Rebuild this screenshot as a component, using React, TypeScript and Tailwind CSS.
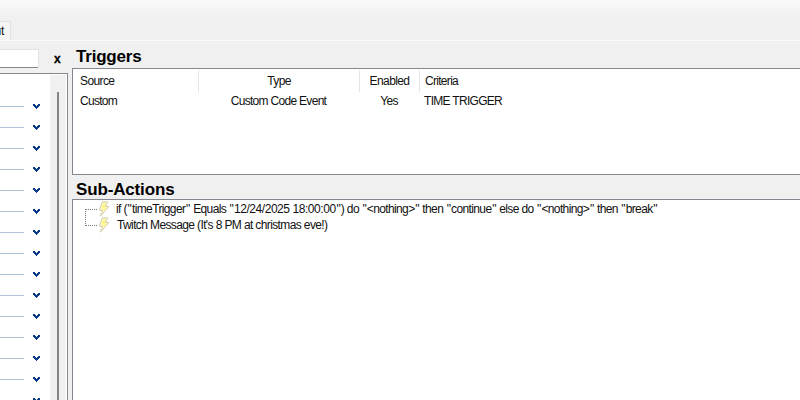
import React from "react";

const rows = Array.from({ length: 15 }, (_, i) => i);

const condition = `if ("timeTrigger" Equals "12/24/2025 18:00:00") do "<nothing>" then "continue" else do "<nothing>" then "break"`;

function Chevron() {
  return (
    <svg width="7" height="5" viewBox="0 0 7 5" shapeRendering="crispEdges" className="ml-[9px] block" fill="#063a86">
      <path d="M0 0h2v1h1v1h1v-1h1v-1h2v2h-1v1h-1v1h-1v1h-1v-1h-1v-1h-1v-1h-1z" />
    </svg>
  );
}

function Bolt() {
  return (
    <svg width="12" height="16" viewBox="0 0 12 16" className="block shrink-0">
      <path d="M4.3 .8H9.6L7.4 5.5H10.9L2.4 15.2 4.5 9.2H1.4Z" fill="#fffac4" stroke="#cfc6a8" strokeWidth=".9" strokeLinejoin="round" />
      <path d="M5.6 2.4L3.4 7.6H6.5L5.2 10.6 8.6 6.6H6L7.8 2.4Z" fill="#fff67e" />
    </svg>
  );
}

function Condition() {
  return (
    <>
      {condition.split(/("|12\/24\/2025 18:00:00)/).map((part, i) => {
        if (part === '"') return <span key={i} className="mx-[0.73px]">"</span>;
        if (part.startsWith("12/")) return <span key={i} className="tracking-[-0.44px]">{part}</span>;
        return part;
      })}
    </>
  );
}

function Sidebar() {
  return (
    <aside className="flex w-[72px] shrink-0 flex-col">
      <div className="flex h-[32px] shrink-0 pt-[8px]">
        <div className="h-[19px] w-[39px] shrink-0 rounded-br-[2px] border-t border-r border-b border-[#e3e3e3] border-b-[#868686] bg-white" />
        <span className="mt-[2px] ml-[15px] text-[12px] leading-[16px] font-bold text-black [-webkit-text-stroke:0.3px_black]">x</span>
      </div>
      <div className="flex min-h-0 w-[68px] flex-1 border-t border-r border-[#828790] bg-white">
        <div className="w-[50px] overflow-hidden pt-[22px]">
          {rows.map((r) => (
            <div key={r} className="flex h-[21px] items-center">
              <div className="h-px w-[24px] bg-[#adc1d9]" />
              <Chevron />
            </div>
          ))}
        </div>
        <div className="mt-px mr-px flex w-[16px] justify-center bg-[#f0f0f0]">
          <div className="mt-[17px] w-[2px] bg-[#858585]" />
        </div>
      </div>
    </aside>
  );
}

export default function App() {
  return (
    <div className="flex h-[400px] w-[800px] flex-col overflow-hidden bg-[#f0f0f0] font-['Liberation_Sans',Arial,sans-serif] text-[12px] leading-[14px] text-[#101010]">
      <header className="flex h-[41px] shrink-0 flex-col justify-end bg-linear-to-b from-[#f8f8f8] from-10% to-[#f0f0f0] to-40%">
        <div className="flex h-[19px] w-[11px] justify-end overflow-hidden border-t border-r border-[#e2e2e2] bg-[#f5f5f5] pt-[2px] pr-[6px] tracking-[-0.3px]">ut</div>
        <div className="h-px bg-[#fafafa]" />
      </header>
      <div className="flex min-h-0 flex-1">
        <Sidebar />
        <main className="flex min-w-0 flex-1 flex-col">
          <h2 className="h-[27px] shrink-0 pt-[6px] pl-[4px] text-[17px] leading-[20px] font-bold tracking-[-0.2px] text-black">Triggers</h2>
          <section className="h-[107px] shrink-0 border-y border-l border-[#828790] bg-white tracking-[-0.7px]">
            <div className="grid h-[23px] grid-cols-[126px_161px_60px_1fr] pt-px">
              <div className="border-r border-[#e5e5e5] pt-[4px] pl-[7px] tracking-[-0.6px]">Source</div>
              <div className="border-r border-[#e5e5e5] pt-[4px] text-center tracking-[-0.6px]">Type</div>
              <div className="border-r border-[#e5e5e5] pt-[4px] text-center tracking-[-0.6px]">Enabled</div>
              <div className="pt-[4px] pl-[5px]">Criteria</div>
            </div>
            <div className="grid h-[20px] grid-cols-[126px_161px_60px_1fr] pt-[2px]">
              <div className="pl-[7px]">Custom</div>
              <div className="pr-[2px] text-center">Custom Code Event</div>
              <div className="pr-[2px] text-center">Yes</div>
              <div className="pl-[4px]">TIME TRIGGER</div>
            </div>
          </section>
          <h2 className="h-[24px] shrink-0 pt-[5px] pl-[4px] text-[17px] leading-[20px] font-bold tracking-[-0.15px] text-black">Sub-Actions</h2>
          <section className="flex min-h-0 flex-1 border-t border-l border-[#828790] bg-white pt-px pl-[12px]">
            <svg width="12" height="34" className="mr-px block shrink-0" fill="none" stroke="#777" strokeDasharray="1 1" shapeRendering="crispEdges">
              <path d="M0.5 8V25M1 8.5H12M1 24.5H12" />
            </svg>
            <div className="tracking-[-0.62px] whitespace-nowrap">
              <div className="flex h-[16px]">
                <Bolt />
                <span className="pt-px pl-[6px]"><Condition /></span>
              </div>
              <div className="flex h-[16px]">
                <Bolt />
                <span className="pt-px pl-[7px]">Twitch Message (It's 8 PM at christmas eve!)</span>
              </div>
            </div>
          </section>
        </main>
      </div>
    </div>
  );
}
